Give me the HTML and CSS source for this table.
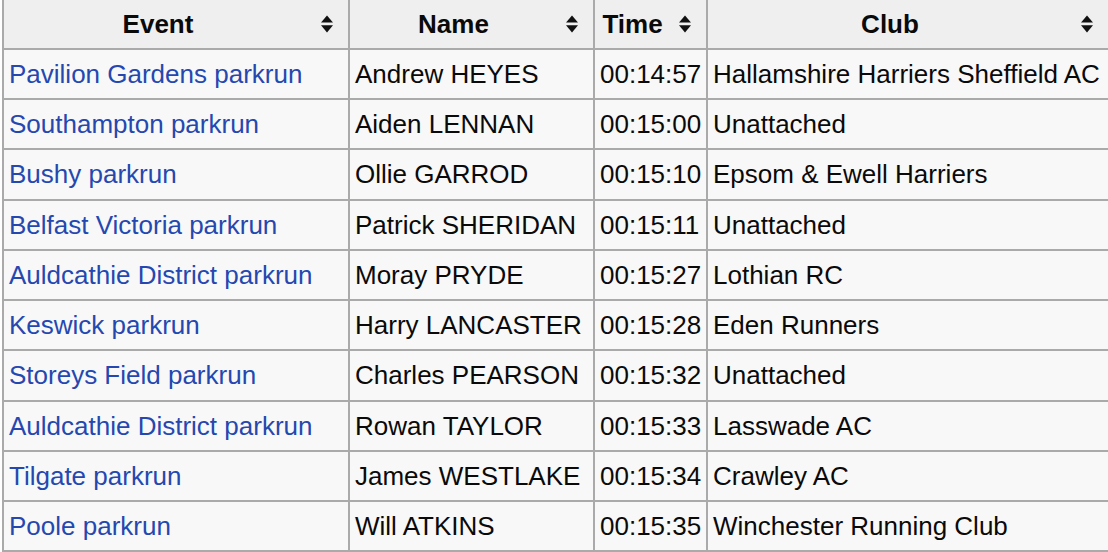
FILE: index.html
```html
<!DOCTYPE html>
<html lang="en">
<head>
<meta charset="utf-8">
<title>parkrun results</title>
<link rel="stylesheet" href="styles.css">
</head>
<body>
<table class="wikitable">
  <thead>
    <tr>
      <th class="sortable col-event">Event</th>
      <th class="sortable col-name">Name</th>
      <th class="sortable col-time">Time</th>
      <th class="sortable col-club">Club</th>
    </tr>
  </thead>
  <tbody>
    <tr><td><a href="#">Pavilion Gardens parkrun</a></td><td>Andrew HEYES</td><td>00:14:57</td><td>Hallamshire Harriers Sheffield AC</td></tr>
    <tr><td><a href="#">Southampton parkrun</a></td><td>Aiden LENNAN</td><td>00:15:00</td><td>Unattached</td></tr>
    <tr><td><a href="#">Bushy parkrun</a></td><td>Ollie GARROD</td><td>00:15:10</td><td>Epsom &amp; Ewell Harriers</td></tr>
    <tr><td><a href="#">Belfast Victoria parkrun</a></td><td>Patrick SHERIDAN</td><td>00:15:11</td><td>Unattached</td></tr>
    <tr><td><a href="#">Auldcathie District parkrun</a></td><td>Moray PRYDE</td><td>00:15:27</td><td>Lothian RC</td></tr>
    <tr><td><a href="#">Keswick parkrun</a></td><td>Harry LANCASTER</td><td>00:15:28</td><td>Eden Runners</td></tr>
    <tr><td><a href="#">Storeys Field parkrun</a></td><td>Charles PEARSON</td><td>00:15:32</td><td>Unattached</td></tr>
    <tr><td><a href="#">Auldcathie District parkrun</a></td><td>Rowan TAYLOR</td><td>00:15:33</td><td>Lasswade AC</td></tr>
    <tr><td><a href="#">Tilgate parkrun</a></td><td>James WESTLAKE</td><td>00:15:34</td><td>Crawley AC</td></tr>
    <tr><td><a href="#">Poole parkrun</a></td><td>Will ATKINS</td><td>00:15:35</td><td>Winchester Running Club</td></tr>
  </tbody>
</table>
</body>
</html>
```
FILE: styles.css
```css
html, body {
  margin: 0;
  padding: 0;
  background: #ffffff;
}

body {
  font-family: "Liberation Sans", Arial, Helvetica, sans-serif;
  font-size: 26px;
  color: #0a0a0a;
  overflow: hidden;
}

.wikitable {
  margin: -2px 0 0 2px;
  border-collapse: separate;
  border-spacing: 0;
  border-left: 2px solid #aaaaaa;
  border-top: 2px solid #aaaaaa;
  table-layout: fixed;
  width: 1108px;
  background: #f8f8f8;
}

.wikitable th,
.wikitable td {
  box-sizing: border-box;
  border-right: 2px solid #aaaaaa;
  border-bottom: 2px solid #aaaaaa;
  padding: 0 5px;
  white-space: nowrap;
  vertical-align: middle;
}

.wikitable th {
  height: 50px;
  line-height: 48px;
  background-color: #efefef;
  font-weight: bold;
  text-align: center;
}

.wikitable td {
  height: 50.22px;
  line-height: 48.22px;
  text-align: left;
  background-color: #f8f8f8;
}

.wikitable th.sortable {
  padding-right: 41px;
  background-image: url("data:image/svg+xml;utf8,<svg xmlns='http://www.w3.org/2000/svg' width='12' height='18' viewBox='0 0 12 18'><path d='M0 7.6 L6 0.6 L12 7.6 Z' fill='%23111'/><path d='M0 10.2 L12 10.2 L6 17.4 Z' fill='%23111'/></svg>");
  background-repeat: no-repeat;
  background-position: right 15px center;
  background-size: 12px 18px;
}

.col-event { width: 346px; }
.col-name { width: 245px; }
.col-time { width: 113px; }
.col-club { width: 402px; }

.wikitable a {
  color: #2548b0;
  text-decoration: none;
}
```
